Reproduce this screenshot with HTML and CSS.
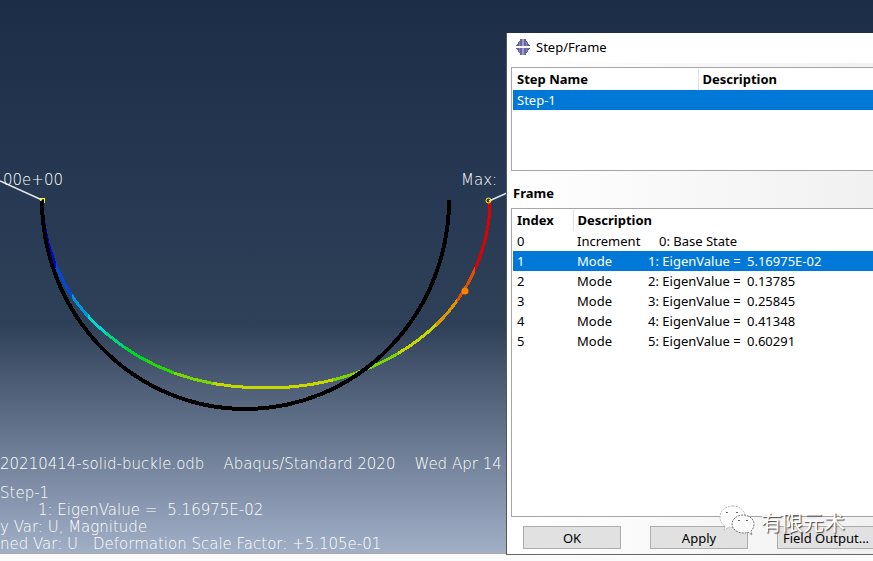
FILE: index.html
```html
<!DOCTYPE html>
<html lang="en">
<head>
    <meta charset="UTF-8">
    <title>Step/Frame</title>
    <link rel="stylesheet" href="styles.css">
</head>
<body>
    <main class="viewport">
        <svg class="plot" width="507" height="456" viewBox="0 0 507 456">
            <defs>
                <!-- contour bands, blue to red -->
                <linearGradient id="bands" gradientUnits="userSpaceOnUse" x1="0" y1="0" x2="500" y2="0">
                    <stop offset="0.112" stop-color="#0000dc"/><stop offset="0.112" stop-color="#0048dc"/>
                    <stop offset="0.144" stop-color="#0048dc"/><stop offset="0.144" stop-color="#0096dc"/>
                    <stop offset="0.176" stop-color="#0096dc"/><stop offset="0.176" stop-color="#00d7d2"/>
                    <stop offset="0.212" stop-color="#00d7d2"/><stop offset="0.212" stop-color="#00d778"/>
                    <stop offset="0.25" stop-color="#00d778"/><stop offset="0.25" stop-color="#00d728"/>
                    <stop offset="0.294" stop-color="#00d728"/><stop offset="0.294" stop-color="#28d700"/>
                    <stop offset="0.348" stop-color="#28d700"/><stop offset="0.348" stop-color="#78d700"/>
                    <stop offset="0.426" stop-color="#78d700"/><stop offset="0.426" stop-color="#c8d700"/>
                    <stop offset="0.666" stop-color="#c8d700"/><stop offset="0.666" stop-color="#78d700"/>
                    <stop offset="0.796" stop-color="#78d700"/><stop offset="0.796" stop-color="#c8d700"/>
                    <stop offset="0.872" stop-color="#c8d700"/><stop offset="0.872" stop-color="#dc9600"/>
                    <stop offset="0.914" stop-color="#dc9600"/><stop offset="0.914" stop-color="#dc5000"/>
                    <stop offset="0.95" stop-color="#dc5000"/><stop offset="0.95" stop-color="#dc0000"/>
                </linearGradient>
            </defs>
            <path class="deformed" d="M42 200C43 250 65 300 107 334C147 368 200 388 265 388C332 388 392 366 436 325C470 293 490 245 490 201"/>
            <path class="original" d="M42 200A203.500 209 0 0 0 449 200"/>
            <path class="leader" d="M0 181L42 200M489 201L507 193"/>
            <rect class="marker" x="40.500" y="198.500" width="4" height="4"/>
            <path class="original" d="M42 201V212"/>
            <circle class="marker" cx="488.500" cy="200.500" r="2.500"/>
            <circle class="node" cx="465" cy="291" r="3.500"/>
            <text class="label" x="63" y="185" text-anchor="end">00e+00</text>
            <text class="label" x="461" y="185">Max:</text>
        </svg>
        <div class="info">
            <p class="title"><span>20210414-solid-buckle.odb</span><span>Abaqus/Standard 2020</span><span>Wed Apr 14</span></p>
            <p>Step-1</p>
            <p class="indent"><span>1: EigenValue =</span> <span>5.16975E-02</span></p>
            <p>y Var: U, Magnitude</p>
            <p class="scale"><span>ned Var: U</span><span>Deformation Scale Factor: +5.105e-01</span></p>
        </div>
    </main>

    <section class="dialog">
        <header class="dialog-title">
            <svg width="16" height="16" viewBox="0 0 16 16">
                <path fill="#6965a5" d="M5 0h6v2h1v1h1v2h1v1h1v1H1V6h1V5h1V3h1V2h1zM1 9h14v1h-1v1h-1v2h-1v1h-1v2H5v-2H4v-1H3v-2H2v-1H1z"/>
                <path fill="#a09dcb" d="M7 0h2v7H7zM7 9h2v7H7z"/>
                <path fill="#8581b8" d="M4 3h1v4H4zM11 3h1v4h-1zM4 9h1v4H4zM11 9h1v4h-1z"/>
            </svg>
            <span>Step/Frame</span>
        </header>
        <form class="dialog-body">
            <div class="list step-list">
                <table>
                    <colgroup><col class="col-step"><col></colgroup>
                    <thead><tr><th>Step Name</th><th>Description</th></tr></thead>
                    <tbody><tr class="selected"><td>Step-1</td><td></td></tr></tbody>
                </table>
            </div>
            <h2>Frame</h2>
            <div class="list frame-list">
                <table>
                    <colgroup><col class="col-index"><col></colgroup>
                    <thead><tr><th>Index</th><th>Description</th></tr></thead>
                    <tbody>
                        <tr><td>0</td><td><span class="kind base">Increment</span>0: Base State</td></tr>
                        <tr class="selected"><td>1</td><td><span class="kind">Mode</span><span class="mode">1: EigenValue =</span>5.16975E-02</td></tr>
                        <tr><td>2</td><td><span class="kind">Mode</span><span class="mode">2: EigenValue =</span>0.13785</td></tr>
                        <tr><td>3</td><td><span class="kind">Mode</span><span class="mode">3: EigenValue =</span>0.25845</td></tr>
                        <tr><td>4</td><td><span class="kind">Mode</span><span class="mode">4: EigenValue =</span>0.41348</td></tr>
                        <tr><td>5</td><td><span class="kind">Mode</span><span class="mode">5: EigenValue =</span>0.60291</td></tr>
                    </tbody>
                </table>
            </div>
            <div class="buttons">
                <button type="button">OK</button>
                <button type="button">Apply</button>
                <button type="button">Field Output...</button>
            </div>
        </form>
    </section>

    <div class="watermark">
        <svg width="36" height="32" viewBox="0 0 36 32">
            <path class="bubble back" d="M14 1C6 1 1 6 1 12c0 4 2 7 5 9l-1 4 5-3c2 1 5 1 8 0 6-2 9-6 8-12C25 5 20 1 14 1z"/>
            <path class="bubble" d="M24 10c-6 0-11 4-11 9s5 9 11 9c2 0 3 0 5-1l4 3-1-4c2-2 3-4 3-7 0-5-5-9-11-9z"/>
            <path class="eyes" d="M7 8q1-2 2 0M17 8q1-2 2 0M19 16q1-2 2 0M27 16q1-2 2 0"/>
        </svg>
        <span>有限元术</span>
    </div>
</body>
</html>
```
FILE: styles.css
```css
body {
    margin: 0;
    min-height: 100vh;
    position: relative;
    overflow: hidden;
    background: #fbfbfb;
    font-family: "Noto Sans", "Noto Sans CJK SC", sans-serif;
    font-size: 13px;
    color: #000;
}
.viewport {
    overflow: hidden;
    background: linear-gradient(#1c2d48 0%, #2f4159 59%, #a1afc7 100%);
    border-bottom: 1px solid #b0a8a8;
    color: #fff;
    font-family: "DejaVu Sans", Verdana, sans-serif;
    font-size: 15px;
    font-weight: 200;
}
.plot {
    display: block;
}
.original {
    fill: none;
    stroke: #000;
    stroke-width: 4;
    shape-rendering: crispEdges;
}
.deformed {
    fill: none;
    stroke: url(#bands);
    stroke-width: 3;
    shape-rendering: crispEdges;
}
.leader {
    fill: none;
    stroke: #e6e6ec;
    stroke-width: 1.5;
}
.marker {
    fill: none;
    stroke: #ff0;
}
.node {
    fill: #ff8000;
}
.label {
    fill: #fff;
}
.info p {
    margin: 0;
    line-height: 17px;
    white-space: nowrap;
}
.info .title {
    display: flex;
    gap: 19px;
    margin-bottom: 12px;
}
.info .indent {
    display: flex;
    gap: 10px;
    padding-left: 38px;
}
.info .scale {
    display: flex;
    gap: 15px;
}

/* dialog window, floats over the viewport and runs past its right edge */
.dialog {
    position: absolute;
    left: 506px;
    top: 33px;
    right: -16px;
    box-sizing: border-box;
    border-left: 1px solid #555;
    border-bottom: 1px solid #666;
    background: #fff;
}
.dialog-title {
    display: flex;
    align-items: center;
    gap: 5px;
    height: 28px;
    padding: 0 0 2px 8px;
}
.dialog-body {
    padding: 4px 4px 5px;
    background: linear-gradient(90deg, #fff, #f0f0f0);
}
.list {
    border: 1px solid #a5a5a5;
    background: #fff;
    padding: 1px;
}
.step-list {
    height: 100px;
}
.frame-list {
    height: 305px;
}
table {
    width: 100%;
    table-layout: fixed;
    border-collapse: collapse;
}
.col-step {
    width: 185px;
}
.col-index {
    width: 60px;
}
th, td {
    height: 20px;
    padding: 0 4px;
    line-height: 20px;
    text-align: left;
    white-space: nowrap;
}
th {
    height: 21px;
    line-height: 21px;
}
th + th {
    border-left: 1px solid #e0e0e0;
}
.selected {
    background: #0078d7;
    color: #fff;
}
.kind {
    display: inline-block;
    width: 71px;
}
.kind.base {
    width: 82px;
}
.mode {
    display: inline-block;
    width: 99px;
}
h2 {
    margin: 0;
    padding: 12px 2px 5px;
    font-size: 13px;
    line-height: 20px;
}
.buttons {
    display: flex;
    gap: 29px;
    padding: 9px 12px 0;
}
button {
    flex: none;
    width: 98px;
    height: 23px;
    padding: 0;
    border: 1px solid #adadad;
    background: #e1e1e1;
    font: inherit;
    color: #000;
}
.watermark {
    position: absolute;
    left: 719px;
    top: 505px;
    display: flex;
    gap: 6px;
    font-family: "Noto Sans CJK SC", sans-serif;
    font-size: 21px;
    line-height: 32px;
    color: #fff;
    text-shadow: 1px 1px 1px #444;
}
.bubble {
    fill: #fff;
    fill-opacity: 0.9;
    stroke: #777;
    stroke-dasharray: 2 1;
}
.bubble.back {
    stroke: #bbb;
}
.eyes {
    fill: none;
    stroke: #666;
}
```
